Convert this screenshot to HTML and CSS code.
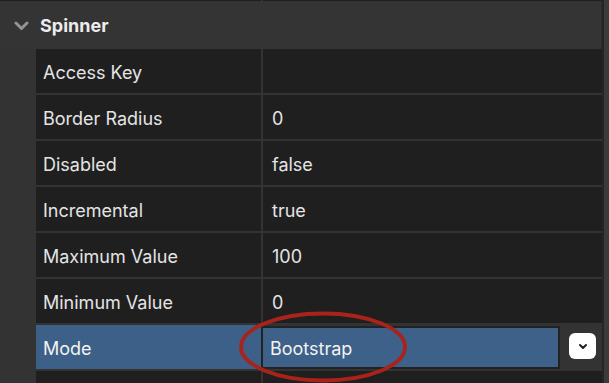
FILE: index.html
```html
<!DOCTYPE html>
<html>
<head>
<meta charset="utf-8">
<link rel="stylesheet" href="styles.css">
</head>
<body>
<div class="window">
  <div class="panel">
    <div class="prev-row"><div class="prev-label"></div><div class="prev-value"></div></div>
    <div class="section-header">
      <svg class="chevron" width="15" height="10" viewBox="0 0 15 10"><path d="M2 2 L7.5 7.5 L13 2" fill="none" stroke="#939393" stroke-width="3" stroke-linecap="round" stroke-linejoin="round"/></svg>
      <span class="section-title">Spinner</span>
    </div>
    <div class="rows">
      <div class="cell label">Access Key</div><div class="cell value"></div>
      <div class="cell label">Border Radius</div><div class="cell value">0</div>
      <div class="cell label">Disabled</div><div class="cell value">false</div>
      <div class="cell label">Incremental</div><div class="cell value">true</div>
      <div class="cell label">Maximum Value</div><div class="cell value">100</div>
      <div class="cell label">Minimum Value</div><div class="cell value">0</div>
      <div class="cell label selected">Mode</div>
      <div class="cell value edit">
        <div class="input">Bootstrap</div>
        <div class="drop-btn"><svg width="10" height="7" viewBox="0 0 10 7"><path d="M2 2 L5 5 L8 2" fill="none" stroke="#222" stroke-width="2" stroke-linecap="round" stroke-linejoin="round"/></svg></div>
      </div>
      <div class="cell label"></div><div class="cell value"></div>
    </div>
  </div>
  <div class="track"></div>
  <svg class="circle" width="609" height="383" viewBox="0 0 609 383"><ellipse cx="323" cy="347" rx="82" ry="33.5" fill="none" stroke="#a9231a" stroke-width="3.8"/></svg>
</div>
</body>
</html>
```
FILE: styles.css
```css
html, body {
  margin: 0;
  padding: 0;
  background: #333333;
  overflow: hidden;
}
.window {
  position: relative;
  display: flex;
  width: 609px;
  height: 383px;
  overflow: hidden;
  font-family: Inter, "Liberation Sans", sans-serif;
  color: #e4e4e4;
}
.panel {
  width: 602px;
  flex: none;
  display: flex;
  flex-direction: column;
  background: #333333;
  border-right: 2px solid #252525;
}
.prev-row {
  flex: none;
  display: grid;
  grid-template-columns: 261px 339px;
  column-gap: 2px;
  height: 1px;
  background: #333;
}
.prev-label, .prev-value { background: #1f1f1f; }
.section-header {
  flex: none;
  height: 48px;
  display: flex;
  align-items: center;
  background: #343434;
  border-right: 1px solid #2b2b2b;
  box-sizing: border-box;
}
.chevron {
  margin-left: 14px;
  margin-right: 11px;
  margin-top: 1px;
}
.section-title {
  font-weight: 700;
  font-size: 18px;
  color: #ececec;
}
.rows {
  flex: none;
  display: grid;
  grid-template-columns: 225px 339px;
  grid-auto-rows: 44px;
  gap: 2px;
  padding-left: 36px;
  background: #333333;
}
.cell {
  background: #1f1f1f;
  display: flex;
  align-items: center;
  font-size: 18px;
  padding-top: 2px;
  box-sizing: border-box;
}
.label { padding-left: 7px; }
.value { padding-left: 9px; }
.selected { background: #3d6088; color: #f2f2f2; }
.edit {
  background: #333333;
  padding-left: 0;
  padding-top: 0;
  margin-left: -2px;
}
.input {
  box-sizing: border-box;
  width: 299px;
  height: 43px;
  border: 2px solid #222222;
  background: #3d6189;
  color: #f2f2f2;
  display: flex;
  align-items: center;
  padding-left: 7px;
  padding-top: 2px;
  margin-top: 1px;
}
.drop-btn {
  width: 27px;
  height: 26px;
  margin-left: 9px;
  margin-top: -2px;
  background: #ffffff;
  border-radius: 6px;
  display: flex;
  align-items: center;
  justify-content: center;
}
.track {
  flex: none;
  width: 5px;
  background: #3b3b3b;
}
.circle {
  position: absolute;
  left: 0;
  top: 0;
  pointer-events: none;
}
```
